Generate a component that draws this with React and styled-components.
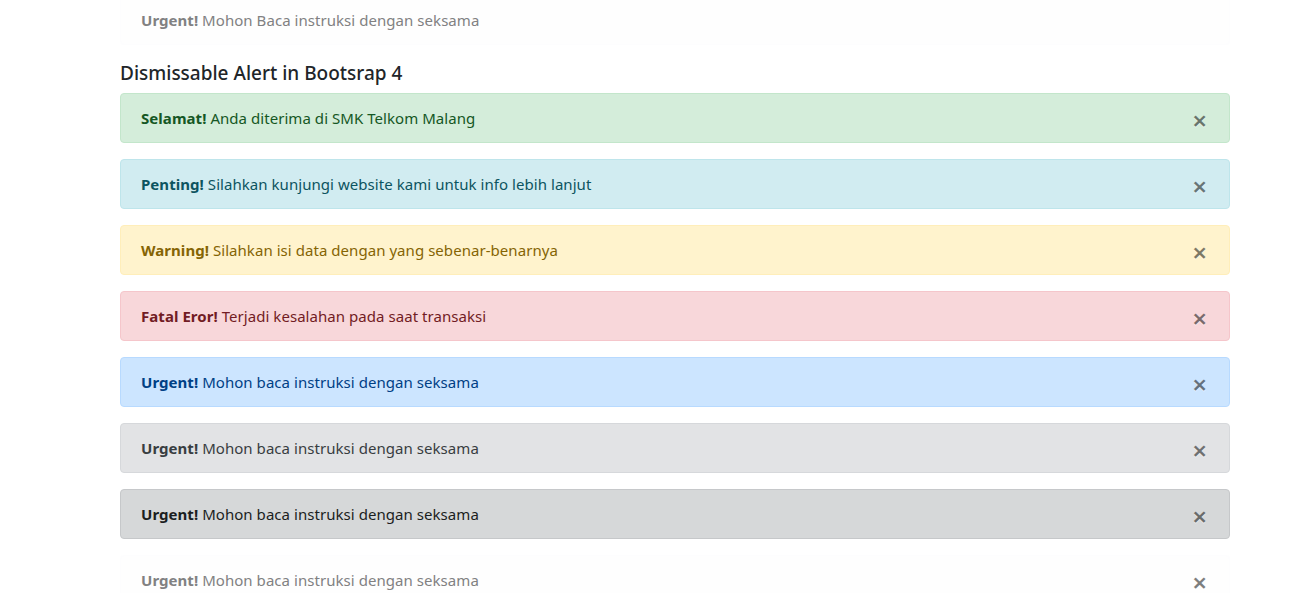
import React from 'react';
import styled, { createGlobalStyle } from 'styled-components';

const GlobalStyle = createGlobalStyle`
  html, body {
    margin: 0;
    padding: 0;
    background: #fff;
    font-family: "Noto Sans", "Open Sans", Arial, sans-serif;
    font-size: 16px;
    color: #212529;
  }
`;

const alerts = [
  { type: 'success', title: 'Selamat!', text: 'Anda diterima di SMK Telkom Malang' },
  { type: 'info', title: 'Penting!', text: 'Silahkan kunjungi website kami untuk info lebih lanjut' },
  { type: 'warning', title: 'Warning!', text: 'Silahkan isi data dengan yang sebenar-benarnya' },
  { type: 'danger', title: 'Fatal Eror!', text: 'Terjadi kesalahan pada saat transaksi' },
  { type: 'primary', title: 'Urgent!', text: 'Mohon baca instruksi dengan seksama' },
  { type: 'secondary', title: 'Urgent!', text: 'Mohon baca instruksi dengan seksama' },
  { type: 'dark', title: 'Urgent!', text: 'Mohon baca instruksi dengan seksama' },
  { type: 'light', title: 'Urgent!', text: 'Mohon baca instruksi dengan seksama' },
];

function App() {
  return (
    <>
      <GlobalStyle />
      <Page>
        <Alert variant="light">
          <strong>Urgent!</strong> Mohon Baca instruksi dengan seksama
        </Alert>
        <Heading>Dismissable Alert in Bootsrap 4</Heading>
        {alerts.map((a, i) => (
          <Alert key={i} variant={a.type}>
            <strong>{a.title}</strong> {a.text}
            <Close type="button" aria-label="Close">&times;</Close>
          </Alert>
        ))}
      </Page>
    </>
  );
}

//////// style ////////

const colors = {
  success: ['#155724', '#d4edda', '#c3e6cb'],
  info: ['#0c5460', '#d1ecf1', '#bee5eb'],
  warning: ['#856404', '#fff3cd', '#ffeeba'],
  danger: ['#721c24', '#f8d7da', '#f5c6cb'],
  primary: ['#004085', '#cce5ff', '#b8daff'],
  secondary: ['#383d41', '#e2e3e5', '#d6d8db'],
  dark: ['#1b1e21', '#d6d8d9', '#c6c8ca'],
  light: ['#818182', '#fefefe', '#fdfdfe'],
};

const Page = styled.div`
  width: 1110px;
  margin: -5px 0 0 120px;
  display: flex;
  flex-direction: column;
`;

const Heading = styled.h5`
  margin: 0 0 8px;
  font-size: 19px;
  font-weight: 500;
  line-height: 24px;
  color: #212529;
`;

const Alert = styled.div`
  position: relative;
  margin-bottom: 16px;
  padding: 12px 20px;
  line-height: 24px;
  font-size: 15px;
  letter-spacing: 0.05px;
  border: 1px solid ${p => colors[p.variant][2]};
  border-radius: 4px;
  background: ${p => colors[p.variant][1]};
  color: ${p => colors[p.variant][0]};

  strong {
    font-weight: 700;
  }
`;

const Close = styled.button`
  position: absolute;
  top: 0;
  right: 0;
  padding: 14px 22px 11px;
  border: 0;
  background: transparent;
  font-family: "Noto Sans", Arial, sans-serif;
  font-size: 26px;
  font-weight: 600;
  line-height: 24px;
  color: #000;
  opacity: 0.5;
  text-shadow: 0 1px 0 #fff;
  cursor: pointer;
`;

export default App;
